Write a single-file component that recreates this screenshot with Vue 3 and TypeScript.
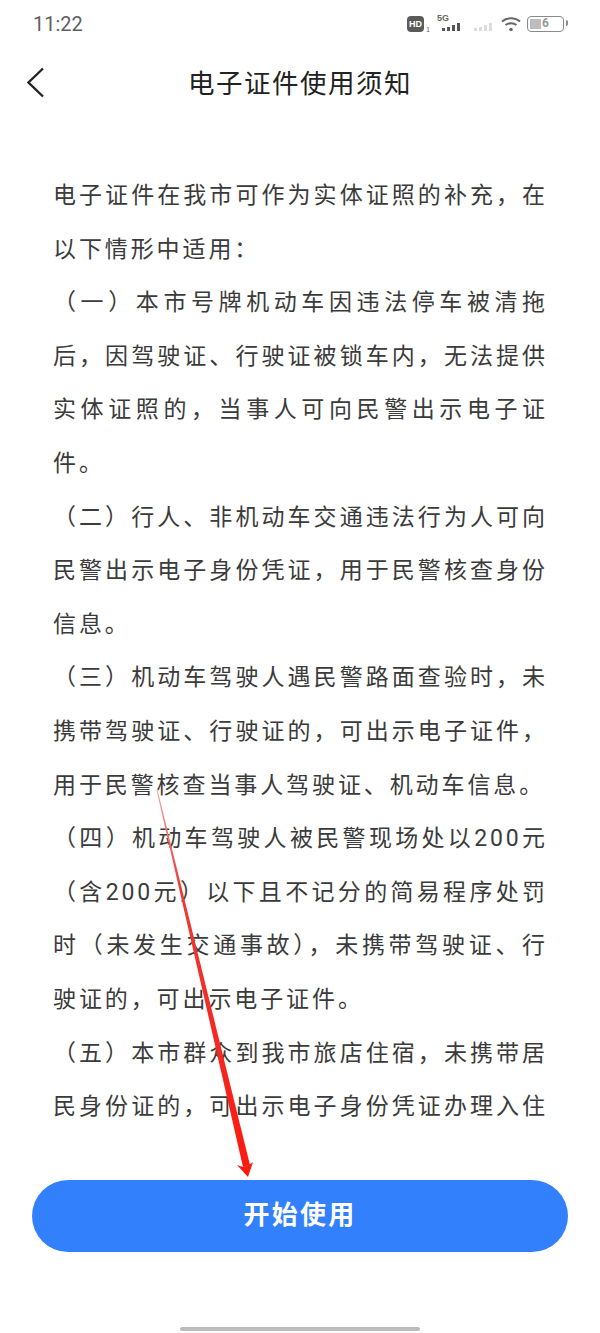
<script setup lang="ts">
const paragraphs: string[] = [
  '电子证件在我市可作为实体证照的补充，在以下情形中适用：',
  '（一）本市号牌机动车因违法停车被清拖后，因驾驶证、行驶证被锁车内，无法提供实体证照的，当事人可向民警出示电子证件。',
  '（二）行人、非机动车交通违法行为人可向民警出示电子身份凭证，用于民警核查身份信息。',
  '（三）机动车驾驶人遇民警路面查验时，未携带驾驶证、行驶证的，可出示电子证件，用于民警核查当事人驾驶证、机动车信息。',
  '（四）机动车驾驶人被民警现场处以200元（含200元）以下且不记分的简易程序处罚时（未发生交通事故），未携带驾驶证、行驶证的，可出示电子证件。',
  '（五）本市群众到我市旅店住宿，未携带居民身份证的，可出示电子身份凭证办理入住'
]
</script>

<template>
  <div class="page">
    <header class="status">
      <span class="time">11:22</span>
      <div class="status-icons">
        <span class="hd">HD</span><span class="sim">1</span>
        <svg class="sig" width="26" height="20" viewBox="0 0 26 20">
          <text x="1" y="8" font-size="9" font-weight="700" font-family="Liberation Sans" fill="#666">5G</text>
          <rect x="6" y="15" width="3" height="3" fill="#555" />
          <rect x="11" y="14" width="3" height="4" fill="#555" />
          <rect x="16" y="12" width="3" height="6" fill="#555" />
          <rect x="21" y="10" width="3" height="8" fill="#555" />
        </svg>
        <svg class="sig2" width="20" height="12" viewBox="0 0 20 12">
          <rect x="1" y="8" width="3" height="3" fill="#ddd" />
          <rect x="6" y="7" width="3" height="4" fill="#ddd" />
          <rect x="11" y="5" width="3" height="6" fill="#ddd" />
          <rect x="16" y="3" width="3" height="8" fill="#ddd" />
        </svg>
        <svg class="wifi" width="20" height="16" viewBox="0 0 20 16" fill="none" stroke="#666" stroke-width="2">
          <path d="M1 5.500C6 1 14 1 19 5.500" />
          <path d="M4.500 9C7.500 6.500 12.500 6.500 15.500 9" />
          <circle cx="10" cy="13.500" r="1.800" fill="#666" stroke="none" />
        </svg>
        <div class="battery"><div class="battery-fill"></div><span class="battery-num">6</span></div>
      </div>
    </header>

    <nav class="nav">
      <svg class="back" width="22" height="32" viewBox="0 0 22 32" fill="none" stroke="#222" stroke-width="2.400">
        <path d="M18 2.500L3.500 16.500L18 30.500" />
      </svg>
      <h1 class="title">电子证件使用须知</h1>
    </nav>

    <main class="content">
      <p v-for="(p, i) in paragraphs" :key="i" class="para">{{ p }}</p>
    </main>

    <div class="action">
      <button class="start" type="button">开始使用</button>
    </div>
    <div class="home-wrap"><div class="home"></div></div>

    <svg class="arrow" width="600" height="1333" viewBox="0 0 600 1333">
      <defs>
        <linearGradient id="tail" x1="157" y1="790" x2="245" y2="1170" gradientUnits="userSpaceOnUse">
          <stop offset="0" stop-color="#f4a0a0" />
          <stop offset="0.25" stop-color="#ee3a36" />
          <stop offset="1" stop-color="#fb1a10" />
        </linearGradient>
      </defs>
      <polygon points="156.500,790 157.500,790 250,1165 243,1167" fill="url(#tail)" />
      <polygon points="248,1177 237,1165 243,1167 249,1165 253,1162" fill="#fb1a10" />
    </svg>
  </div>
</template>

<style scoped>
.page {
  position: relative;
  width: 600px;
  height: 1333px;
  overflow: hidden;
  background: #ffffff;
  font-family: "Roboto", "Noto Sans CJK SC", sans-serif;
  display: flex;
  flex-direction: column;
}
.status {
  height: 47px;
  flex: none;
  display: flex;
  align-items: center;
  justify-content: space-between;
  padding: 0 36px 0 33px;
  box-sizing: border-box;
}
.time {
  font-size: 20px;
  color: #5f5f5f;
}
.status-icons {
  display: flex;
  align-items: center;
}
.hd {
  width: 17px;
  height: 16px;
  border-radius: 4px;
  background: #5a5a5a;
  color: #fff;
  font-size: 9px;
  font-weight: 700;
  line-height: 16px;
  text-align: center;
  font-family: "Liberation Sans", sans-serif;
}
.sim {
  width: 4px;
  font-size: 7px;
  color: #666;
  align-self: flex-end;
  margin: 0 6px 0 2px;
  font-family: "Liberation Sans", sans-serif;
}
.sig { margin-top: -1px; }
.sig2 { margin: 4px 8px 0 11px; }
.wifi { margin-right: 6px; }
.battery {
  position: relative;
  width: 37px;
  height: 16px;
  box-sizing: border-box;
  border: 1.500px solid #8a8a8a;
  border-radius: 4px;
}
.battery::after {
  content: "";
  position: absolute;
  right: -4.500px;
  top: 3.500px;
  width: 2px;
  height: 6px;
  background: #8a8a8a;
  border-radius: 0 2px 2px 0;
}
.battery-fill {
  position: absolute;
  left: 2px;
  top: 2px;
  bottom: 2px;
  width: 11px;
  background: #bdbdbd;
}
.battery-num {
  position: absolute;
  left: 14px;
  top: -1px;
  font-size: 12px;
  line-height: 15px;
  font-weight: 700;
  color: #999;
}
.nav {
  position: relative;
  height: 72px;
  flex: none;
  box-sizing: border-box;
  padding-bottom: 4px;
  display: flex;
  align-items: center;
  justify-content: center;
}
.back {
  position: absolute;
  left: 25px;
  top: 19px;
}
.title {
  margin: 0;
  font-size: 26.500px;
  font-weight: 400;
  color: #222;
  letter-spacing: 1.500px;
}
.content {
  height: 1059px;
  flex: none;
  box-sizing: border-box;
  padding: 50px 52px 0 53px;
  overflow: hidden;
}
.para {
  margin: 0;
  font-size: 23px;
  line-height: 53.600px;
  letter-spacing: 2.900px;
  color: #3b3b3b;
  text-align: justify;
}
.para:last-child {
  text-align-last: justify;
}
.action {
  flex: none;
  margin-top: 2px;
  padding: 0 32px;
}
.start {
  display: block;
  width: 100%;
  height: 72px;
  border: none;
  border-radius: 36px;
  padding: 0 0 7px;
  background: #3380fd;
  color: #fff;
  font-family: inherit;
  font-size: 26px;
  font-weight: 700;
  letter-spacing: 2.300px;
}
.home-wrap {
  flex: 1;
  display: flex;
  justify-content: center;
  align-items: flex-end;
  padding-bottom: 2px;
}
.home {
  width: 240px;
  height: 4px;
  border-radius: 2px;
  background: #bcbcbc;
}
.arrow {
  position: absolute;
  left: 0;
  top: 0;
  pointer-events: none;
}
</style>
